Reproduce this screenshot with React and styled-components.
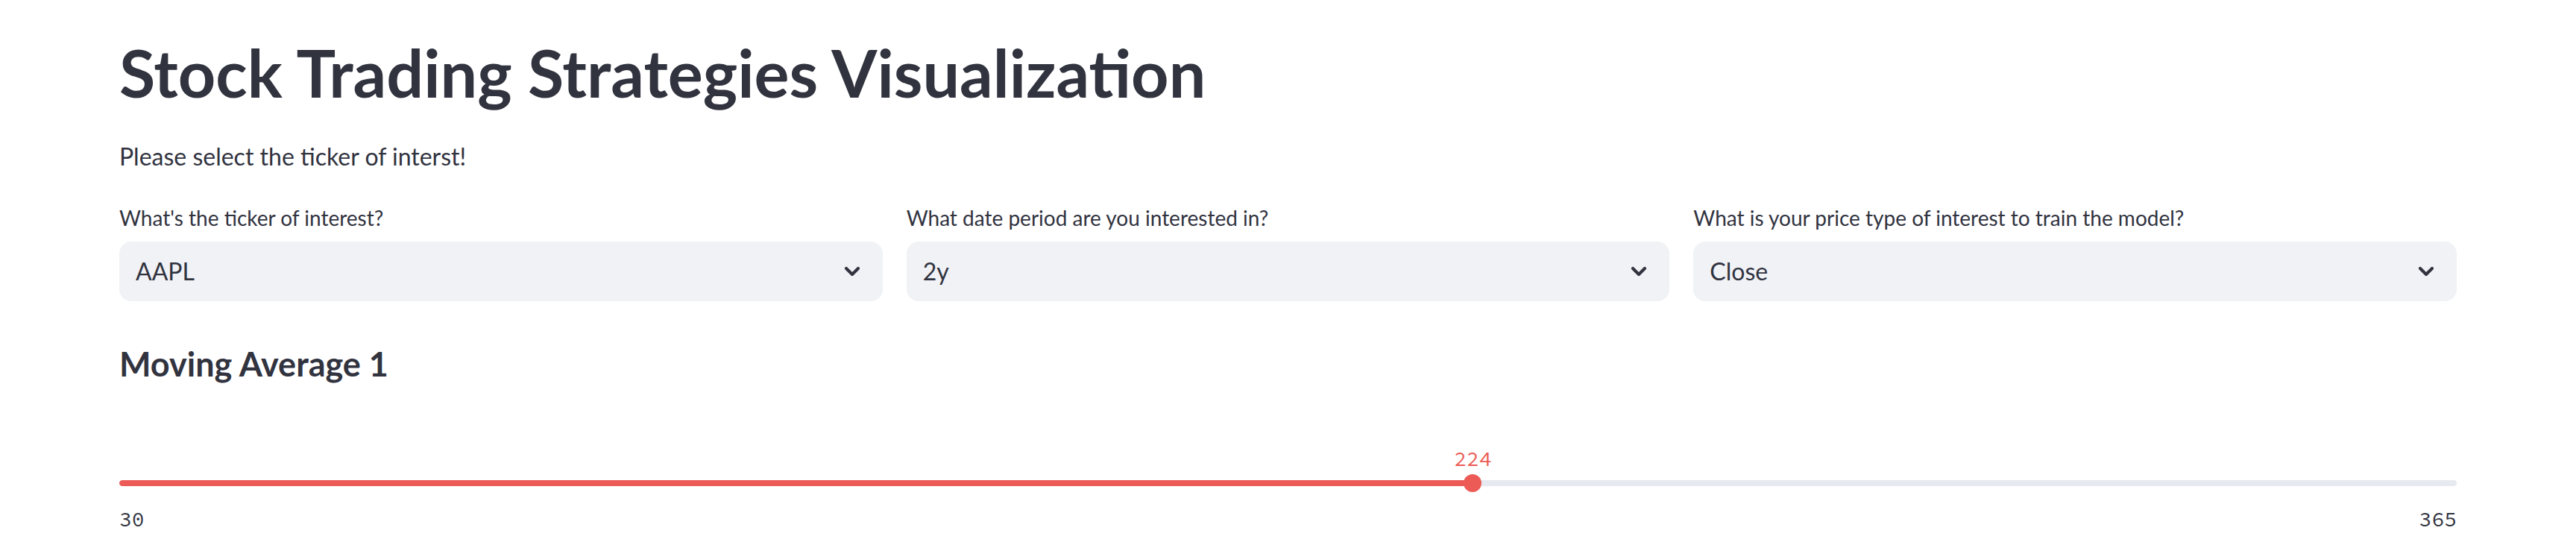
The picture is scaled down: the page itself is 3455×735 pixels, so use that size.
import React from "react";
import styled, { createGlobalStyle } from "styled-components";

const GlobalStyle = createGlobalStyle`
  html, body {
    margin: 0;
    padding: 0;
    background: #ffffff;
  }
  body {
    font-family: "Source Sans Pro", Lato, "Noto Sans", sans-serif;
    color: #31333f;
    -webkit-font-smoothing: antialiased;
  }
`;

const Main = styled.main`
  box-sizing: border-box;
  width: 100%;
  padding: 45px 160px 0;
  display: flex;
  flex-direction: column;
`;

const Title = styled.h1`
  margin: 0;
  font-size: 88px;
  line-height: 1.2;
  font-weight: 700;
  color: #31333f;
`;

const Paragraph = styled.p`
  margin: 33px 0 0;
  font-size: 32px;
  line-height: 1.6;
  color: #31333f;
`;

const Columns = styled.div`
  margin-top: 35px;
  display: grid;
  grid-template-columns: repeat(3, 1fr);
  column-gap: 32px;
`;

const Field = styled.div`
  display: flex;
  flex-direction: column;
  min-width: 0;
`;

const Label = styled.label`
  font-size: 28px;
  line-height: 1.6;
  color: #31333f;
  margin-bottom: 9px;
`;

const SelectBox = styled.div`
  box-sizing: border-box;
  height: 80px;
  border-radius: 16px;
  background: #f0f2f6;
  display: flex;
  align-items: center;
  justify-content: space-between;
  padding: 0 29px 0 22px;
`;

const SelectValue = styled.span`
  font-size: 32px;
  line-height: 1;
  color: #31333f;
`;

const Chevron = styled.svg`
  width: 24px;
  height: 14px;
  display: block;
`;

const SubHeading = styled.h3`
  margin: 57px 0 0;
  font-size: 45px;
  line-height: 1.2;
  font-weight: 700;
  color: #31333f;
`;

const SliderWrap = styled.div`
  margin-top: 121px;
  display: flex;
  flex-direction: column;
`;

const TrackArea = styled.div`
  position: relative;
  height: 24px;
  display: flex;
  align-items: center;
`;

const Track = styled.div`
  position: relative;
  width: 100%;
  height: 8px;
  border-radius: 4px;
  background: #e6e9ef;
  overflow: hidden;
`;

const Fill = styled.div`
  height: 100%;
  background: #ec5b55;
  border-radius: 4px 0 0 4px;
`;

const Thumb = styled.div`
  position: absolute;
  top: 0;
  width: 24px;
  height: 24px;
  margin-left: -12px;
  border-radius: 50%;
  background: #ec5b55;
`;

const ValueLabel = styled.div`
  position: absolute;
  bottom: calc(100% + 7px);
  transform: translateX(-50%);
  font-family: "Source Code Pro", "DejaVu Sans Mono", "Liberation Mono", monospace;
  font-size: 28px;
  line-height: 1;
  color: #ec5b55;
  white-space: nowrap;
`;

const Ticks = styled.div`
  margin-top: 22px;
  display: flex;
  justify-content: space-between;
  font-family: "Source Code Pro", "DejaVu Sans Mono", "Liberation Mono", monospace;
  font-size: 28px;
  line-height: 1;
  color: #31333f;
`;

function ChevronDown() {
  return (
    <Chevron viewBox="0 0 24 14" aria-hidden="true">
      <polyline
        points="4,3 12,11 20,3"
        fill="none"
        stroke="#31333f"
        strokeWidth="4.2"
        strokeLinecap="round"
        strokeLinejoin="round"
      />
    </Chevron>
  );
}

function Select({ label, value }) {
  return (
    <Field>
      <Label>{label}</Label>
      <SelectBox>
        <SelectValue>{value}</SelectValue>
        <ChevronDown />
      </SelectBox>
    </Field>
  );
}

function Slider({ min, max, value }) {
  const pct = ((value - min) / (max - min)) * 100;
  return (
    <SliderWrap>
      <TrackArea>
        <Track>
          <Fill style={{ width: `${pct}%` }} />
        </Track>
        <Thumb style={{ left: `${pct}%` }} />
        <ValueLabel style={{ left: `${pct}%` }}>{value}</ValueLabel>
      </TrackArea>
      <Ticks>
        <span>{min}</span>
        <span>{max}</span>
      </Ticks>
    </SliderWrap>
  );
}

export default function App() {
  return (
    <>
      <GlobalStyle />
      <Main>
        <Title>Stock Trading Strategies Visualization</Title>
        <Paragraph>Please select the ticker of interst!</Paragraph>
        <Columns>
          <Select label="What's the ticker of interest?" value="AAPL" />
          <Select label="What date period are you interested in?" value="2y" />
          <Select
            label="What is your price type of interest to train the model?"
            value="Close"
          />
        </Columns>
        <SubHeading>Moving Average 1</SubHeading>
        <Slider min={30} max={365} value={224} />
      </Main>
    </>
  );
}
